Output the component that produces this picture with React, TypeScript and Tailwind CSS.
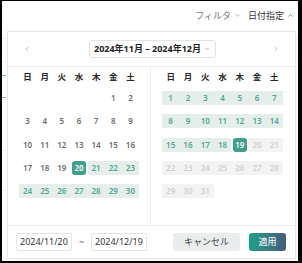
import React from 'react';
import { ChevronLeft, ChevronRight, ChevronDown, ChevronUp } from 'lucide-react';

type Kind = 'normal' | 'range' | 'sel' | 'off';
type Cell = { d: number; kind: Kind } | null;

const WEEK = ['日', '月', '火', '水', '木', '金', '土'];

const nov: Cell[] = [
  ...Array(5).fill(null),
  ...Array.from({ length: 30 }, (_, i) => {
    const d = i + 1;
    return { d, kind: (d < 20 ? 'normal' : d === 20 ? 'sel' : 'range') as Kind };
  }),
];

const dec: Cell[] = Array.from({ length: 31 }, (_, i) => {
  const d = i + 1;
  return { d, kind: (d < 19 ? 'range' : d === 19 ? 'sel' : 'off') as Kind };
});

const DayCell = ({ cell }: { cell: Cell }) => {
  if (!cell) return <div className="h-[14px]" />;
  if (cell.kind === 'sel') {
    return (
      <div className="h-[14px] flex justify-center">
        <div className="w-[14px] h-[14px] rounded-[3px] bg-[#3f9e8c] text-white flex items-center justify-center">{cell.d}</div>
      </div>
    );
  }
  const cls =
    cell.kind === 'range'
      ? 'bg-[#e5eeeb] text-[#4da796]'
      : cell.kind === 'off'
      ? 'bg-[#f3f3f3] text-[#cfcfcf]'
      : 'text-[#6b6b6b]';
  return <div className={`h-[14px] flex items-center justify-center ${cls}`}>{cell.d}</div>;
};

const Month = ({ cells, width }: { cells: Cell[]; width: string }) => (
  <div className={width}>
    <div className="grid grid-cols-7 h-[14px] items-center text-[8.5px] font-bold text-[#262626]">
      {WEEK.map(w => (
        <div key={w} className="text-center">{w}</div>
      ))}
    </div>
    <div className="grid grid-cols-7 gap-y-[9.3px] mt-[7px] text-[8px] font-semibold">
      {cells.map((c, i) => (
        <DayCell key={i} cell={c} />
      ))}
    </div>
  </div>
);

export default function App() {
  return (
    <div
      className="relative w-[302px] h-[263px] bg-white overflow-hidden border-black border-t border-l-2 border-r-4 border-b-2"
      style={{ fontFamily: '"Noto Sans", "Noto Sans CJK JP", sans-serif' }}
    >
      {/* top bar */}
      <div className="h-[29px] flex items-center justify-end pr-[4px] gap-[7px] text-[9px]">
        <div className="flex items-center gap-[3px] text-[#777]">
          <span>フィルタ</span>
          <ChevronDown size={7} strokeWidth={2.5} className="text-[#999]" />
        </div>
        <div className="flex items-center gap-[3px] text-[#333]">
          <span>日付指定</span>
          <ChevronUp size={7} strokeWidth={3} className="text-[#3f9e8c]" />
        </div>
      </div>

      {/* page content behind the popover */}
      <div className="flex flex-col">
        <div className="h-[9px] border-b border-[#ececec]" />
        <div className="h-[23px] border-b border-[#f0f0f0]" />
        <div className="h-[26px] flex items-center"><div className="w-[4px] h-[1px] bg-[#7cc2a8]" /></div>
        <div className="h-[19px] flex items-center"><div className="w-[4px] h-[1px] bg-[#7aa8c4]" /></div>
        <div className="h-[44px] border-b border-[#eeeeee]" />
        <div className="h-[40px] border-b border-[#eeeeee]" />
      </div>

      {/* popover */}
      <div className="absolute left-[5px] top-[30px] w-[289px] h-[228px] bg-white border border-[#e8e8e8] shadow-[0_1px_4px_rgba(0,0,0,0.06)] flex flex-col">
        <div className="h-[35px] border-b border-[#ececec] flex items-center justify-between px-[15px]">
          <ChevronLeft size={8} strokeWidth={2} className="text-[#aaa]" />
          <button className="h-[18px] w-[127px] ml-[2px] border border-[#e2e2e2] rounded-[3px] flex items-center pl-[4px] gap-[3px] text-[9px] font-bold text-[#222]">
            <span>2024年11月 – 2024年12月</span>
            <ChevronDown size={6} strokeWidth={2.5} className="text-[#999]" />
          </button>
          <ChevronRight size={8} strokeWidth={2} className="text-[#aaa]" />
        </div>

        <div className="h-[159px] border-b border-[#ececec] flex">
          <div className="w-[143px] border-r border-[#ececec] pl-[11px] pt-[3px]">
            <Month cells={nov} width="w-[120px]" />
          </div>
          <div className="flex-1 pl-[11px] pt-[3px]">
            <Month cells={dec} width="w-[121px]" />
          </div>
        </div>

        <div className="flex-1 flex items-center pl-[8px] pr-[9px] text-[9px]">
          <div className="w-[56px] h-[18px] border border-[#e4e4e4] rounded-[2px] flex items-center pl-[3px] text-[#333]">2024/11/20</div>
          <div className="w-[19px] text-center text-[#666]">~</div>
          <div className="w-[56px] h-[18px] border border-[#e4e4e4] rounded-[2px] flex items-center pl-[3px] text-[#333]">2024/12/19</div>
          <button className="ml-auto w-[67px] h-[18px] rounded-[3px] bg-[#e9eded] text-[#444]">キャンセル</button>
          <button className="ml-[9px] w-[37px] h-[18px] rounded-[3px] bg-gradient-to-r from-[#16a08a] to-[#435c78] text-white">適用</button>
        </div>
      </div>
    </div>
  );
}
